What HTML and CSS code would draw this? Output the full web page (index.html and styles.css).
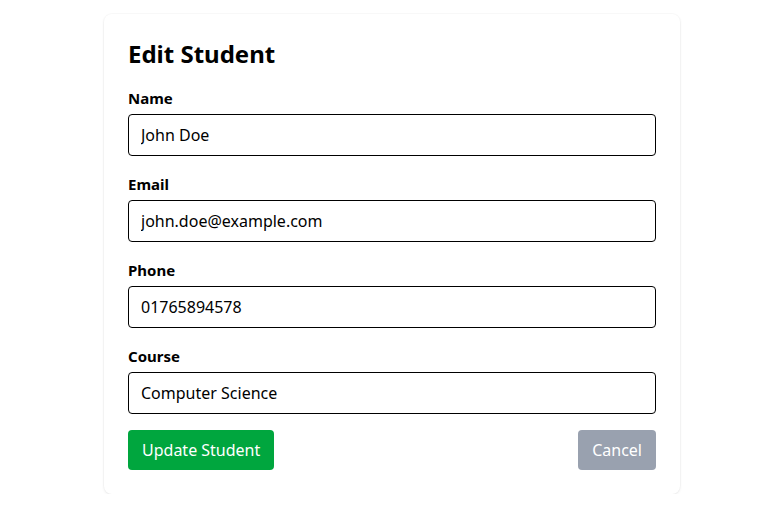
FILE: index.html
```html
<!DOCTYPE html>
<html lang="en">
<head>
<meta charset="utf-8">
<title>Edit Student</title>
<link rel="stylesheet" href="styles.css">
</head>
<body>
<main class="page">
  <form class="card">
    <h1 class="title">Edit Student</h1>
    <div class="field">
      <label class="label" for="name">Name</label>
      <input class="input" id="name" type="text" value="John Doe">
    </div>
    <div class="field">
      <label class="label" for="email">Email</label>
      <input class="input" id="email" type="text" value="john.doe@example.com">
    </div>
    <div class="field">
      <label class="label" for="phone">Phone</label>
      <input class="input" id="phone" type="text" value="01765894578">
    </div>
    <div class="field">
      <label class="label" for="course">Course</label>
      <input class="input" id="course" type="text" value="Computer Science">
    </div>
    <div class="actions">
      <button class="btn btn-primary" type="button">Update Student</button>
      <button class="btn btn-cancel" type="button">Cancel</button>
    </div>
  </form>
</main>
</body>
</html>
```

FILE: styles.css
```css
* { box-sizing: border-box; }
html, body { margin: 0; padding: 0; background: #fff; }
body {
  font-family: "Noto Sans", "Open Sans", sans-serif;
  color: #000;
}
.page {
  display: flex;
  justify-content: center;
  padding: 14px 0 0 17px;
}
.card {
  width: 576px;
  padding: 24px;
  background: #fff;
  border-radius: 8px;
  box-shadow: 0 0 0 1px rgba(0,0,0,0.02), 0 1px 3px rgba(0,0,0,0.08);
  display: flex;
  flex-direction: column;
}
.title {
  margin: 0 0 16px;
  font-size: 24px;
  line-height: 32px;
  font-weight: 700;
}
.field {
  display: flex;
  flex-direction: column;
  margin-bottom: 16px;
}
.label {
  font-size: 15px;
  line-height: 24px;
  font-weight: 700;
  margin-bottom: 4px;
}
.input {
  height: 42px;
  border: 1px solid #000;
  border-radius: 4px;
  padding: 0 12px;
  font: inherit;
  font-size: 16px;
  color: #000;
  background: #fff;
}
.actions {
  display: flex;
  justify-content: space-between;
}
.btn {
  height: 40px;
  padding: 0 14px;
  border: none;
  border-radius: 4px;
  font: inherit;
  font-size: 16px;
  color: #fff;
}
.btn-primary { background: #00a63e; }
.btn-cancel { background: #99a1af; }
```
